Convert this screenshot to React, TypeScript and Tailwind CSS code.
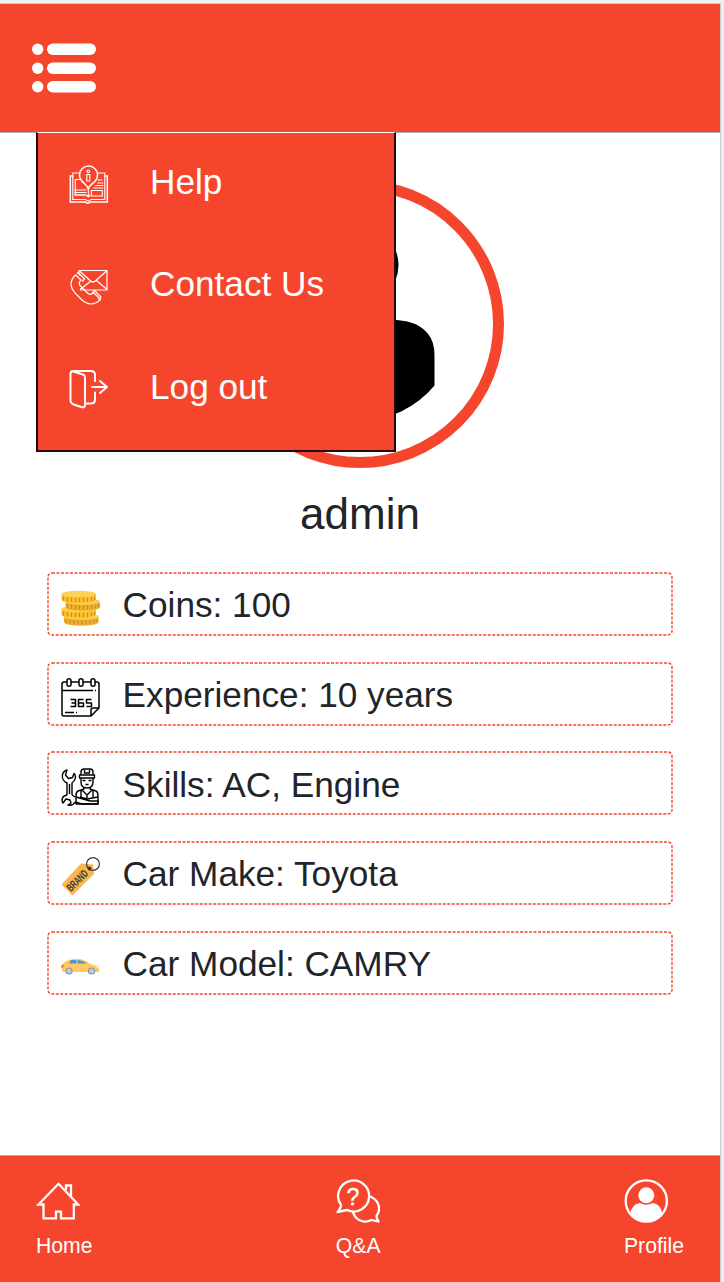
import type { ReactNode } from "react";

const HelpIcon = () => (
  <svg className="size-10" viewBox="0.7 -1 40 40" fill="none" stroke="white" strokeWidth="1.1">
    <path d="M5 11H2v26h15.500c.5 1.500 3.500 1.500 4 0H39V11h-3" strokeWidth="1.500" />
    <path d="M12 8H4.500v26.500H17l3 1.500 3-1.500h13.500V8H29M12 14.500H7V30h11l2 2 2-2M20 23v9" />
    <path d="M20 24c-1-4-4-5-6.500-8a9 9 0 1 1 13.500 0c-2.500 3-6 4-7 8Z" strokeWidth="1.500" />
    <circle cx="20" cy="6.300" r="1.300" />
    <path d="M18.500 9.500h3V16h-3ZM29 15h5M29 18h6M27 20.500h8M25 23h10M6 25h12M6 27.500h12M6 30h11M23 25.500h11V31H23Z" />
  </svg>
);

const ContactIcon = () => (
  <svg className="size-10" viewBox="0 -2.500 40 40" fill="none" stroke="white" strokeWidth="1.200" strokeLinejoin="round">
    <path d="M10 6V1h28v19.500H11" />
    <path d="m10 1 11 10q3 3 6 0L38 1M11 20l11-8.500M38 20l-10.500-9" />
    <path d="M6.500 5.500C0 12 1 18 6.500 24l6 6c6 5.500 13 6 19 0l-7-7c-2 2-4 2.500-6 .5l-7-7c-2-2-1.500-4 .5-6Z" />
    <path d="m8 4 1-1 6.500 6.500L13 12M23.500 23l2-2 6.500 6.500-2.500 2.500" />
  </svg>
);

const LogoutIcon = () => (
  <svg className="size-10" viewBox="0 0 40 40" fill="none" stroke="white" strokeWidth="2" strokeLinejoin="round" strokeLinecap="round">
    <path d="m4 2.500 10 3q2 .7 2 3V36q0 3-3 2.200l-9-3Q1.500 34 1.500 32V5Q1.500 2 4 2h18q4 0 4 4v6M26 23.500v7q0 4-4 4h-6M23 18h15m-7-6 7 6-7 6" />
  </svg>
);

const CoinsIcon = () => (
  <svg className="size-10" viewBox="0 -0.500 40 40">
    {[[3, 28], [0.5, 20.5], [4.5, 13], [0.5, 5.5]].map(([x, y], i) => (
      <g key={y} transform={`translate(${x} ${y})`}>
        <path d="M1 0v5.500c0 5 34.500 5 34.500 0V0Z" fill={i % 2 ? "#fdc02f" : "#eeb02b"} />
        <path d="M3 2.500v4M7 3v4.500M11 3.500V8m4-4.500V8m4-4.500V8m4-4.500V8m4-4.500V8m4-5v4m3-4.500V6" stroke="#c99028" strokeWidth="1.200" />
        <ellipse cx="18.250" cy="0" rx="17.250" ry="3.300" fill="#fdd157" />
      </g>
    ))}
  </svg>
);

const CalendarIcon = () => (
  <svg className="size-10" viewBox="-1 0 40 40" fill="none" stroke="black" strokeWidth="1.500" strokeLinejoin="round">
    <path d="M6 4H3q-2 0-2 2v30q0 2 2 2h27l8-8V6q0-2-2-2h-2M10 4h8m4 0h8M1 12.500h31m2 0h1M30 38v-6q0-2 2-2h6M4 34.500h9m2 0h1" />
    <rect x="6" y=".8" width="4" height="7.500" rx="2" />
    <rect x="18" y=".8" width="4" height="7.500" rx="2" />
    <rect x="30" y=".8" width="4" height="7.500" rx="2" />
    <path d="M9.500 21.500h5v7h-5M10.500 25h4M22.500 21.500H17.500v7h5V25h-5M30.500 21.500h-5V25h5v3.500h-5" strokeWidth="1.500" />
  </svg>
);

const MechanicIcon = () => (
  <svg className="size-10" viewBox="0 0 40 40" fill="none" stroke="black" strokeWidth="1.400" strokeLinejoin="round">
    <path d="M7 28V16C0.500 13 1 5 7 3L5.500 8l3 3.500 4-1L14 6.500C17 9 15 14 12 16v12M9.500 17v10" />
    <path d="M7 28c-5 1-6 5-4 8l3-4 4 1 1 3-3 2c4 1 6-1 7-3M12 28l3 2" />
    <path d="M21 8V5q0-3 3-3h6q3 0 3 3v3M19.500 8h15v3h-15ZM24.500 3v3h5V3M21 11v4q0 6 6 6t6-6v-4M22.500 13.500h3m3 0h3m-6 4h3" />
    <path d="M24 20v2l-6 2q-2 1-2 5v8h22v-8q0-4-2-5l-6-2v-2M22 23l5 5 5-5m-5 5v3m-6-8v7m12-7v7" />
    <path d="m16 30 14 4h8v3H22l-7-2m23-5-11 2-7-2" />
  </svg>
);

const BrandIcon = () => (
  <svg className="size-10 overflow-visible" viewBox="0 0 40 40">
    <path d="M1.500 27.500 21 6.500l12 1 1 9.500-21.500 21.500Z" fill="#fbb54c" />
    <circle cx="33" cy="7" r="6.400" fill="none" stroke="#343a3c" strokeWidth="1.200" />
    <circle cx="29.500" cy="11.500" r="1.900" fill="#343a3c" />
    <text x="11" y="35" transform="rotate(-45 11 35)" textLength="25" lengthAdjust="spacingAndGlyphs" fontSize="11" fontWeight="700" fontFamily="Liberation Sans, sans-serif" fill="#343a3c">BRAND</text>
  </svg>
);

const CarIcon = () => (
  <svg className="size-10" viewBox="0 0 40 40">
    <path d="m1.500 18 4-3.500q3-2.500 12-2.500 7 0 12.500 5l7 2q2.500 1 2.500 4l-1 2h-35q-2-1-2-4Z" fill="#ffc95c" />
    <path d="m9 16 2-3q9-1 16 3.500L9.500 16.500Z" fill="#4a94d3" />
    <path d="m16.500 12 1 5" stroke="#ffd98b" />
    <path d="M1.500 18h3l-2 3h-1" fill="#ed675f" />
    <path d="m35 19.500 4 .5v2Z" fill="#e8edf0" />
    <circle cx="9" cy="24" r="3.600" fill="#8397ab" />
    <circle cx="31.500" cy="24" r="3.600" fill="#8397ab" />
    <circle cx="9" cy="24" r="2.500" fill="#c1c9d1" />
    <circle cx="31.500" cy="24" r="2.500" fill="#c1c9d1" />
  </svg>
);

const HomeIcon = () => (
  <svg className="size-11" viewBox="0 0 44 44" fill="none" stroke="white" strokeWidth="2.300">
    <path d="M7.500 25.500v13.900H20v-6.700h5v6.700h12.800V25.500h4.400L22.500 4.800 2.500 25.500ZM30 11V6.500h5v12" />
  </svg>
);

const QaIcon = () => (
  <svg className="size-11" viewBox="0 0 44 44" fill="none" stroke="white" strokeWidth="2.300" strokeLinejoin="round">
    <path d="M5 26A15.500 15.500 0 1 1 11 31L1.500 33Q5 29 5 26Z" />
    <path d="M33 17c9 3 13 12 7.500 20 0 2 1 4 2 5.500l-7-1.500C28 45 19 41 17 33" />
    <text x="17" y="25.500" textAnchor="middle" fontSize="23" fontFamily="Liberation Sans, sans-serif" fill="white" strokeWidth=".4">?</text>
  </svg>
);

const ProfileIcon = () => (
  <svg className="size-11" viewBox="-0.300 0 44 44" fill="white">
    <circle cx="22" cy="22" r="20.600" fill="none" stroke="white" strokeWidth="2.300" />
    <circle cx="22" cy="16.300" r="8" />
    <path d="M6 34q2-9 9.500-10 6.500 3.500 13 0Q36 25 38 34a20 20 0 0 1-32 0Z" />
  </svg>
);

const MenuItem = ({ icon, label }: { icon: ReactNode; label: string }) => (
  <li className="flex h-[102.500px] items-center gap-[41px] pl-[31px]">
    {icon}
    <span className="-mt-[4.600px] text-[35.200px] leading-10">{label}</span>
  </li>
);

const InfoRow = ({ icon, label }: { icon: ReactNode; label: string }) => (
  <li className="relative flex h-16 items-center gap-[22.600px] pl-[13px]">
    <svg className="absolute inset-0 size-full" fill="none" stroke="#f5452c" strokeWidth="1.400" strokeDasharray="3 1.500">
      <rect x="1" y="1" width="624" height="62" rx="4" />
    </svg>
    <span className="mt-2">{icon}</span>
    <span className="mt-[2.400px] text-[35.200px] leading-10">{label}</span>
  </li>
);

const Tab = ({ icon, label }: { icon: ReactNode; label: string }) => (
  <a className="flex flex-col items-start gap-[9px]">
    {icon}
    <span className="text-[21.200px] leading-7">{label}</span>
  </a>
);

export default function App() {
  return (
    <div className="h-[1282px] w-[724px] overflow-hidden bg-[#efefef] pt-[3px] font-['Liberation_Sans',Arial,sans-serif]">
      <div className="flex h-[1279px] w-[721px] flex-col border-t border-r border-[#cbcbcf] bg-white">
        <header className="relative z-10 h-[129px] shrink-0 border-b border-[#aaa] bg-[#f5452c]">
          <button className="ml-8 mt-[39px] block" aria-label="Menu">
            <svg className="h-[50px] w-16" viewBox="0 0 64 50" fill="white">
              {[0, 19, 37.5].map((y) => (
                <g key={y}>
                  <circle cx="5.700" cy={y + 6.2} r="5.700" />
                  <rect x="15" y={y + 0.5} width="49" height="11.500" rx="5.750" />
                </g>
              ))}
            </svg>
          </button>
          <ul className="absolute top-[128px] left-9 h-80 w-[360px] border-2 border-t border-[#240905] border-t-white bg-[#f5452c] text-white">
            <MenuItem icon={<HelpIcon />} label="Help" />
            <MenuItem icon={<ContactIcon />} label="Contact Us" />
            <MenuItem icon={<LogoutIcon />} label="Log out" />
          </ul>
        </header>
        <main className="flex grow flex-col items-center pt-[47px] text-[#212529]">
          <svg className="size-72 shrink-0" viewBox="0 0 288 288">
            <circle cx="144" cy="144" r="138.500" fill="white" stroke="#f5452c" strokeWidth="11" />
            <circle cx="144" cy="85" r="38.500" />
            <path d="M69.500 205.500V175q0-28 30-34 13-2 18-2 27 10 54 0 5 0 20 2.500 27 7 27 33.500v30.500a96.500 96.500 0 0 1-149 0Z" />
          </svg>
          <h1 className="mt-[19px] text-[44px] leading-[54px]">admin</h1>
          <ul className="mt-[31px] flex w-[626px] flex-col gap-[25.700px]">
            <InfoRow icon={<CoinsIcon />} label="Coins: 100" />
            <InfoRow icon={<CalendarIcon />} label="Experience: 10 years" />
            <InfoRow icon={<MechanicIcon />} label="Skills: AC, Engine" />
            <InfoRow icon={<BrandIcon />} label="Car Make: Toyota" />
            <InfoRow icon={<CarIcon />} label="Car Model: CAMRY" />
          </ul>
        </main>
        <footer className="flex h-[127px] shrink-0 justify-between border-t border-[#aaa] bg-[#f5452c] px-9 pt-[23px] text-white">
          <Tab icon={<HomeIcon />} label="Home" />
          <Tab icon={<QaIcon />} label="Q&A" />
          <Tab icon={<ProfileIcon />} label="Profile" />
        </footer>
      </div>
    </div>
  );
}
